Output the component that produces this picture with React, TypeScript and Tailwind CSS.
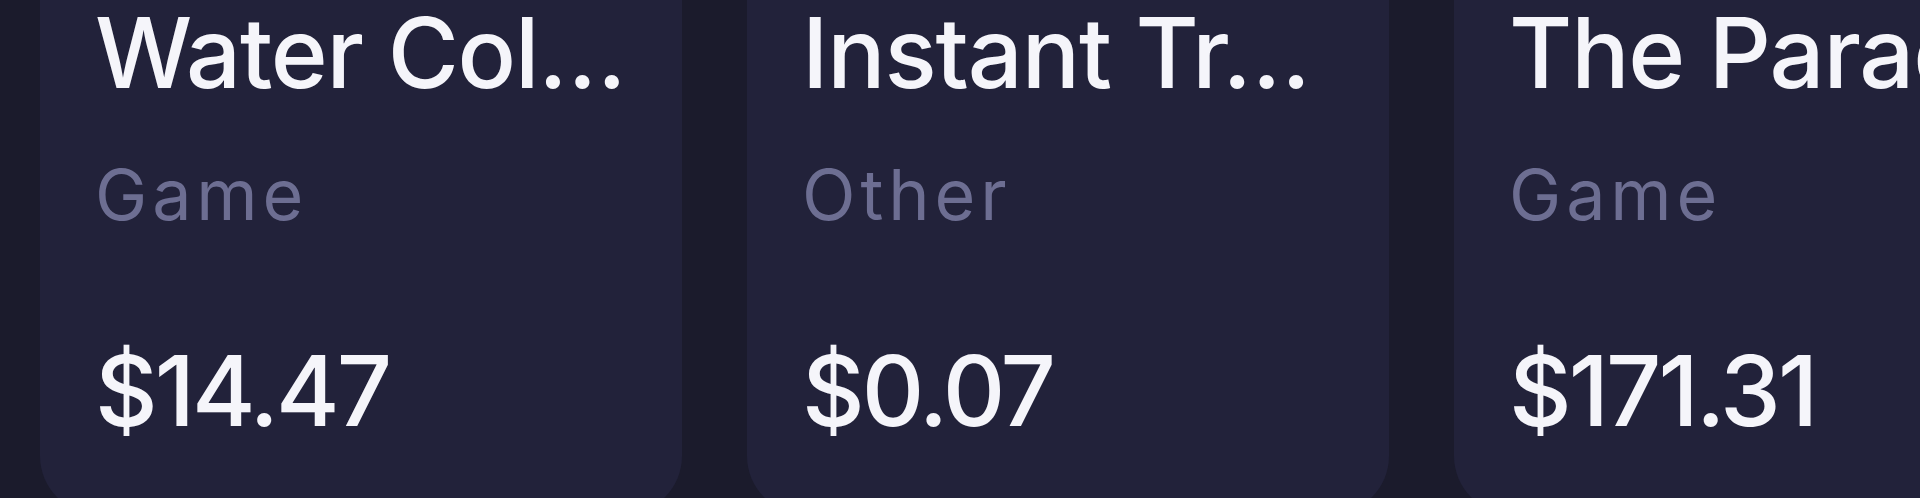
const items = [
  { title: 'Water Col…', category: 'Game', price: '$14.47' },
  { title: 'Instant Tr…', category: 'Other', price: '$0.07' },
  { title: 'The Paradise', category: 'Game', price: '$171.31' },
];

function ProductCard({ title, category, price }: { title: string; category: string; price: string }) {
  return (
    <div className="w-[642px] shrink-0 rounded-[58px] bg-[#22223a] px-[55px] pt-[55px] pb-[63px]">
      <h3 className="whitespace-nowrap text-[97px] font-medium leading-[120px] tracking-[-0.012em] text-[#f5f5fa]">
        {title}
      </h3>
      <p className="mt-[42px] text-[70px] leading-[80px] tracking-[0.07em] text-[#6d6e92]">{category}</p>
      <p className="mt-[96px] text-[97px] font-medium leading-[120px] tracking-[-0.03em] text-[#f5f5fa]">{price}</p>
    </div>
  );
}

export default function App() {
  return (
    <div className="h-[498px] w-full overflow-hidden bg-[#1b1b2c] font-['Inter',sans-serif]">
      <div className="-mt-[62px] flex gap-[65px] pl-[40px]">
        {items.map((item) => (
          <ProductCard key={item.price} {...item} />
        ))}
      </div>
    </div>
  );
}
